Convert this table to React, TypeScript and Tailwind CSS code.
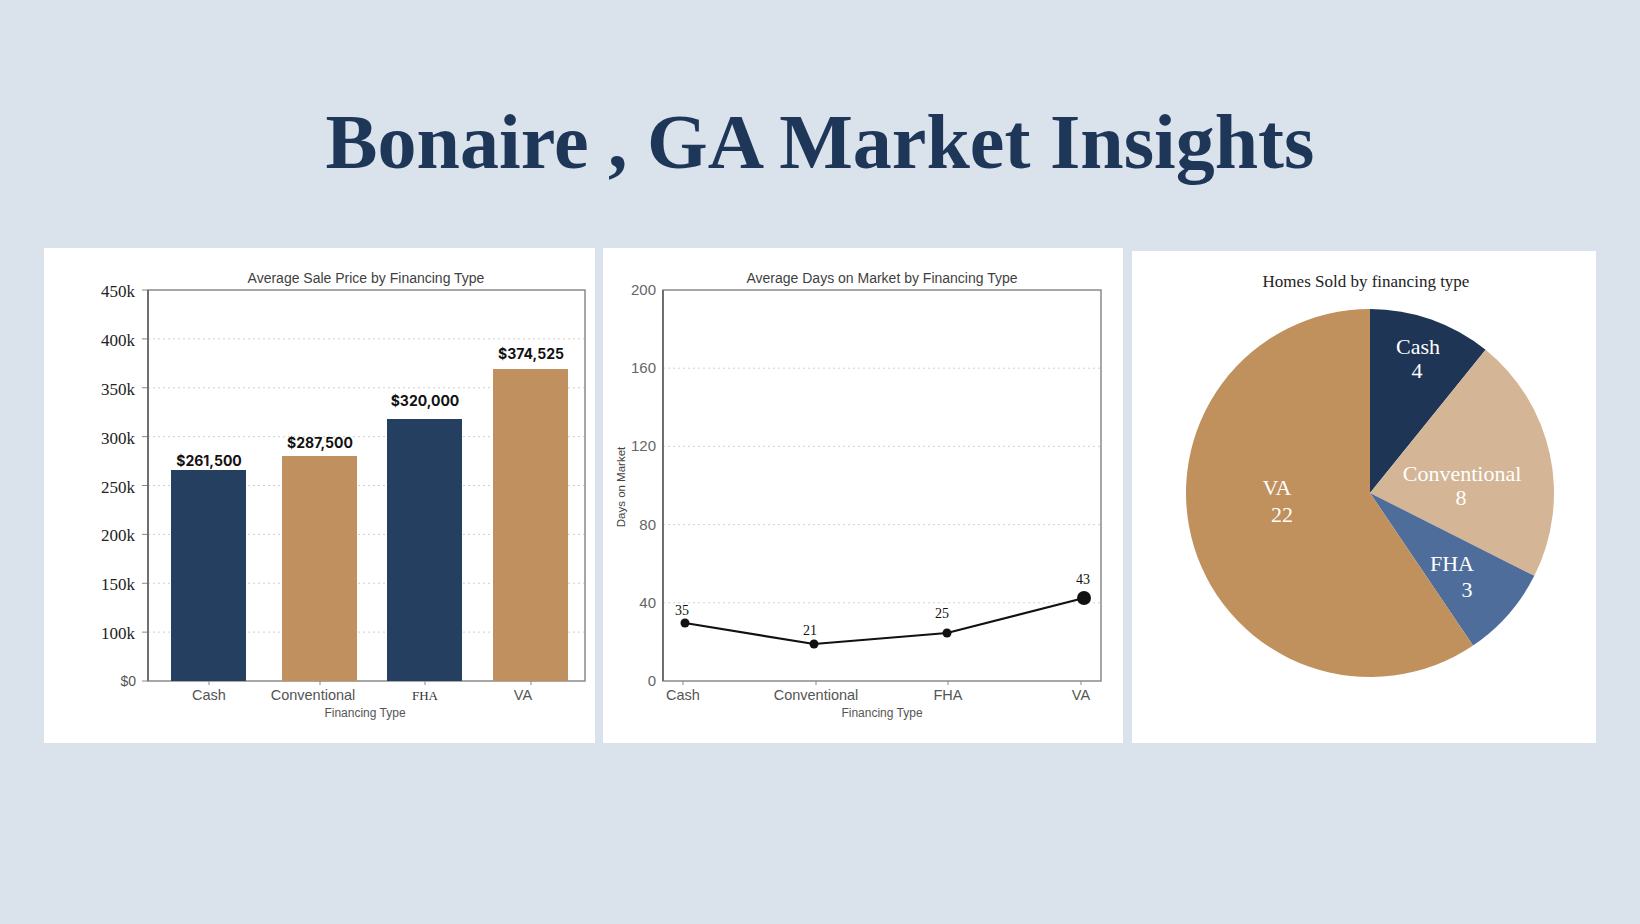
const SANS = '"Liberation Sans", Arial, sans-serif'
const SERIF = '"Liberation Serif", "Times New Roman", serif'
const BOLD_SANS = 'Inter, "Liberation Sans", sans-serif'

const NAVY = '#253f60'
const GOLD = '#c0905e'

// chart 1 geometry (card-local px)
const plot = { left: 104, right: 541, top: 42, bottom: 433 }

const priceTicks = ['450k', '400k', '350k', '300k', '250k', '200k', '150k', '100k', '$0']

const bars = [
  { label: 'Cash', value: '$261,500', x: 127, top: 222, vy: 218, lx: 165, color: NAVY },
  { label: 'Conventional', value: '$287,500', x: 238, top: 208, vy: 200, lx: 269, color: GOLD },
  { label: 'FHA', value: '$320,000', x: 343, top: 171, vy: 158, lx: 381, color: NAVY },
  { label: 'VA', value: '$374,525', x: 449, top: 121, vy: 111, lx: 479, color: GOLD },
]

function SalePriceChart() {
  const step = (plot.bottom - plot.top) / (priceTicks.length - 1)
  return (
    <svg width={551} height={495} viewBox="0 0 551 495">
      <text x={322} y={35} textAnchor="middle" fontFamily={SANS} fontSize={14} fill="#3f3f3f">
        Average Sale Price by Financing Type
      </text>
      {priceTicks.map((t, i) => {
        const y = plot.top + i * step
        const isLast = i === priceTicks.length - 1
        return (
          <g key={t}>
            {i > 0 && !isLast && (
              <line x1={plot.left} x2={plot.right} y1={y} y2={y} stroke="#cfcfcf" strokeWidth={1} strokeDasharray="2 3" />
            )}
            <line x1={plot.left - 6} x2={plot.left} y1={y} y2={y} stroke="#888" strokeWidth={1} />
            {isLast ? (
              <text x={92} y={y + 5} textAnchor="end" fontFamily={SANS} fontSize={14} fill="#555">
                {t}
              </text>
            ) : (
              <text x={91} y={y + 7} textAnchor="end" fontFamily={SERIF} fontSize={17} fill="#222">
                {t}
              </text>
            )}
          </g>
        )
      })}
      <rect x={plot.left} y={plot.top} width={plot.right - plot.left} height={plot.bottom - plot.top} fill="none" stroke="#8a8a8a" strokeWidth={1.5} />
      <line x1={plot.left} x2={plot.left} y1={plot.top} y2={plot.bottom} stroke="#6f6f6f" strokeWidth={2} />
      {bars.map((b) => (
        <g key={b.label}>
          <rect x={b.x} y={b.top} width={75} height={plot.bottom - b.top} fill={b.color} />
          <text x={b.x + 38} y={b.vy} textAnchor="middle" fontFamily={BOLD_SANS} fontWeight={700} fontSize={14} fill="#111">
            {b.value}
          </text>
          <line x1={b.x + 38} x2={b.x + 38} y1={plot.bottom} y2={plot.bottom + 4} stroke="#888" />
          {b.label === 'FHA' ? (
            <text x={b.lx} y={452} textAnchor="middle" fontFamily={SERIF} fontSize={13} fill="#333">
              FHA
            </text>
          ) : (
            <text x={b.lx} y={452} textAnchor="middle" fontFamily={SANS} fontSize={14.5} fill="#555">
              {b.label}
            </text>
          )}
        </g>
      ))}
      <text x={321} y={469} textAnchor="middle" fontFamily={SANS} fontSize={12} fill="#555">
        Financing Type
      </text>
    </svg>
  )
}

const dayPlot = { left: 60, right: 498, top: 42, bottom: 433 }
const dayTicks = [200, 160, 120, 80, 40, 0]
const points = [
  { label: 'Cash', value: 35, x: 82, y: 375, r: 4.5, lx: 79, ly: 367, tx: 80 },
  { label: 'Conventional', value: 21, x: 211, y: 396, r: 4.5, lx: 207, ly: 387, tx: 213 },
  { label: 'FHA', value: 25, x: 344, y: 385, r: 4.5, lx: 339, ly: 370, tx: 345 },
  { label: 'VA', value: 43, x: 481, y: 350, r: 7, lx: 480, ly: 336, tx: 478 },
]

function DaysChart() {
  const step = (dayPlot.bottom - dayPlot.top) / (dayTicks.length - 1)
  return (
    <svg width={520} height={495} viewBox="0 0 520 495">
      <text x={279} y={35} textAnchor="middle" fontFamily={SANS} fontSize={14} fill="#3f3f3f">
        Average Days on Market by Financing Type
      </text>
      {dayTicks.map((t, i) => {
        const y = dayPlot.top + i * step
        return (
          <g key={t}>
            {i > 0 && i < dayTicks.length - 1 && (
              <line x1={dayPlot.left} x2={dayPlot.right} y1={y} y2={y} stroke="#d2d2d2" strokeWidth={1} strokeDasharray="2 3" />
            )}
            <text x={53} y={y + 5} textAnchor="end" fontFamily={SANS} fontSize={15} fill="#666">
              {t}
            </text>
          </g>
        )
      })}
      <rect x={dayPlot.left} y={dayPlot.top} width={dayPlot.right - dayPlot.left} height={dayPlot.bottom - dayPlot.top} fill="none" stroke="#8a8a8a" strokeWidth={1.5} />
      <line x1={dayPlot.left} x2={dayPlot.left} y1={dayPlot.top} y2={dayPlot.bottom} stroke="#6f6f6f" strokeWidth={2} />
      <text transform="translate(22 239) rotate(-90)" textAnchor="middle" fontFamily={SANS} fontSize={11.5} fill="#444">
        Days on Market
      </text>
      <polyline points={points.map((p) => `${p.x},${p.y}`).join(' ')} fill="none" stroke="#111" strokeWidth={2.2} />
      {points.map((p) => (
        <g key={p.label}>
          <circle cx={p.x} cy={p.y} r={p.r} fill="#111" />
          <text x={p.lx} y={p.ly} textAnchor="middle" fontFamily={SERIF} fontSize={14} fill="#111">
            {p.value}
          </text>
          <line x1={p.tx} x2={p.tx} y1={dayPlot.bottom} y2={dayPlot.bottom + 4} stroke="#888" />
          <text x={p.tx} y={452} textAnchor="middle" fontFamily={SANS} fontSize={14.5} fill="#555">
            {p.label}
          </text>
        </g>
      ))}
      <text x={279} y={469} textAnchor="middle" fontFamily={SANS} fontSize={12} fill="#555">
        Financing Type
      </text>
    </svg>
  )
}

const slices = [
  { label: 'Cash', count: 4, color: '#1f3556' },
  { label: 'Conventional', count: 8, color: '#d4b596' },
  { label: 'FHA', count: 3, color: '#4e6d9b' },
  { label: 'VA', count: 22, color: '#c0905d' },
]

const pieLabels = [
  { text: 'Cash', x: 286, y: 103 },
  { text: '4', x: 285, y: 127 },
  { text: 'Conventional', x: 330, y: 230 },
  { text: '8', x: 329, y: 254 },
  { text: 'FHA', x: 320, y: 320 },
  { text: '3', x: 335, y: 346 },
  { text: 'VA', x: 145, y: 244 },
  { text: '22', x: 150, y: 271 },
]

function arcPoint(cx: number, cy: number, r: number, deg: number) {
  const a = (deg * Math.PI) / 180
  return [cx + r * Math.sin(a), cy - r * Math.cos(a)]
}

function PieChart() {
  const cx = 238
  const cy = 242
  const r = 184
  const total = slices.reduce((s, x) => s + x.count, 0)
  let start = 0
  return (
    <svg width={464} height={492} viewBox="0 0 464 492">
      <text x={234} y={36} textAnchor="middle" fontFamily={SERIF} fontSize={17} fill="#222">
        Homes Sold by financing type
      </text>
      {slices.map((s) => {
        const sweep = (s.count / total) * 360
        const [x1, y1] = arcPoint(cx, cy, r, start)
        const [x2, y2] = arcPoint(cx, cy, r, start + sweep)
        const large = sweep > 180 ? 1 : 0
        start += sweep
        return <path key={s.label} d={`M${cx} ${cy} L${x1} ${y1} A${r} ${r} 0 ${large} 1 ${x2} ${y2} Z`} fill={s.color} />
      })}
      {pieLabels.map((l) => (
        <text key={l.text} x={l.x} y={l.y} textAnchor="middle" fontFamily={SERIF} fontSize={22} fill="#fff">
          {l.text}
        </text>
      ))}
    </svg>
  )
}

export default function App() {
  return (
    <div className="h-[924px] w-full overflow-hidden bg-[#dae2ec]">
      <h1 className="pt-[103px] text-center font-['Liberation_Serif',serif] text-[78px] leading-none font-bold text-[#1e3658]">
        Bonaire , GA Market Insights
      </h1>
      <div className="mt-[67px] flex items-start gap-2 pl-[44px]">
        <div className="h-[495px] w-[551px] bg-white">
          <SalePriceChart />
        </div>
        <div className="h-[495px] w-[520px] bg-white">
          <DaysChart />
        </div>
        <div className="mt-[3px] ml-px h-[492px] w-[464px] bg-white">
          <PieChart />
        </div>
      </div>
    </div>
  )
}
